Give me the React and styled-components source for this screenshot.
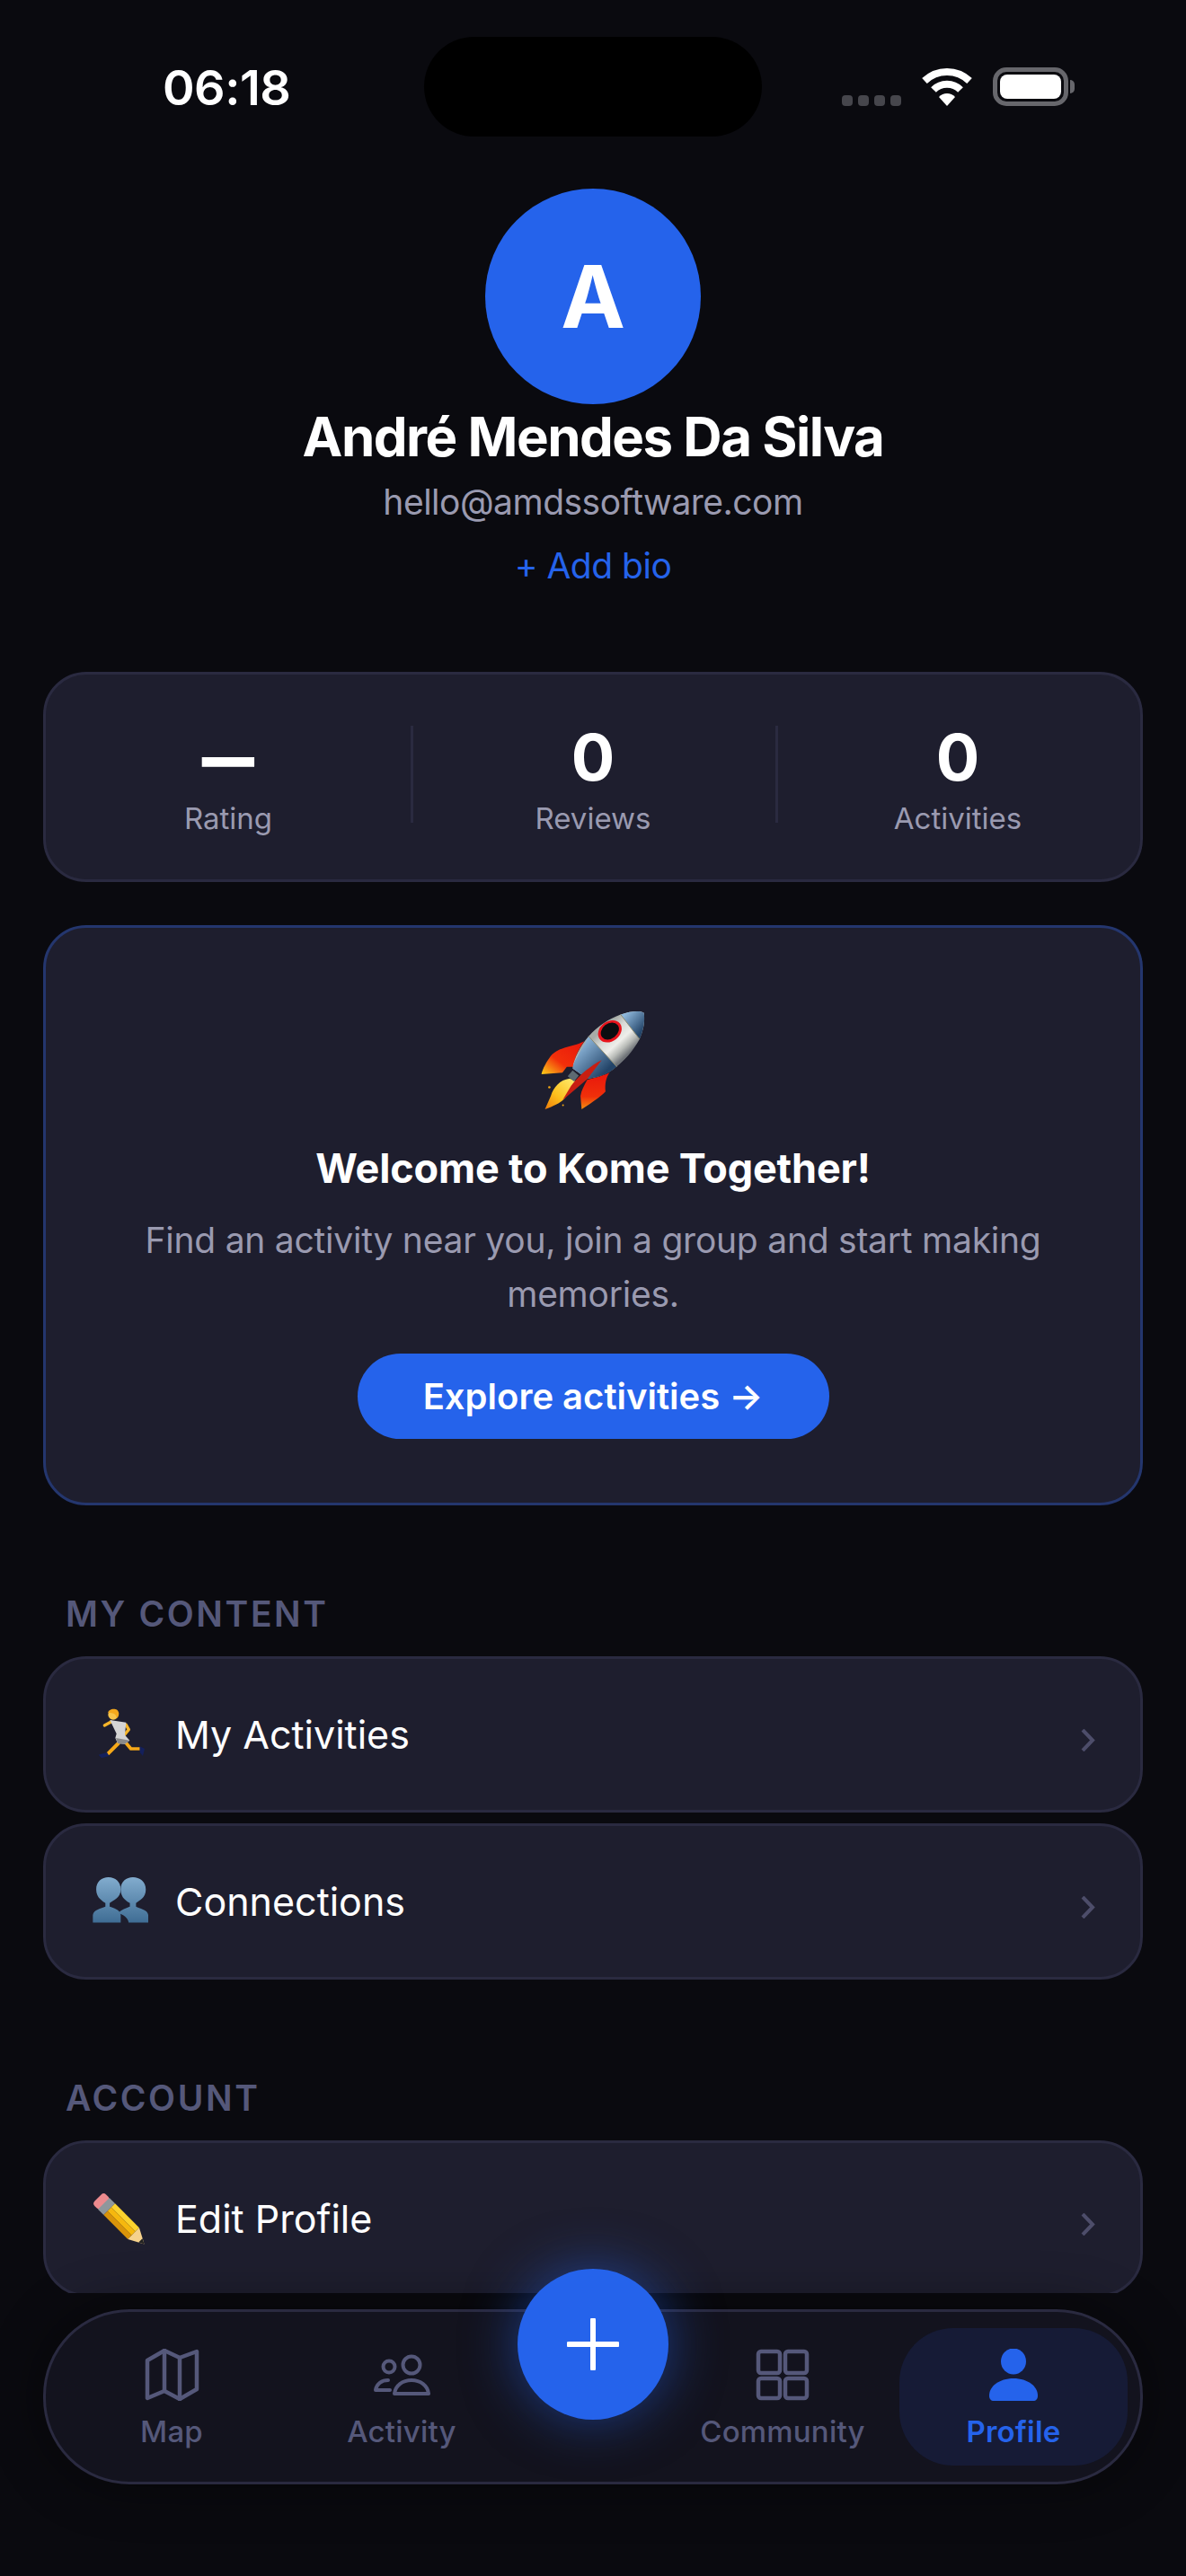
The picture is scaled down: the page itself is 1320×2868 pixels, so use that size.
import React from "react";
import styled, { createGlobalStyle } from "styled-components";

const Global = createGlobalStyle`
  html, body { margin: 0; padding: 0; background: #0a0a0f; }
  * { box-sizing: border-box; }
  body { font-family: Inter, "Noto Sans", sans-serif; color: #fff; }
`;

const Screen = styled.div`
  width: 1320px; height: 2868px; background: #0a0a0f; position: relative; overflow: hidden;
  display: flex; flex-direction: column;
`;
const Clip = styled.div`
  height: 2553px; overflow: hidden; flex: none;
`;
const StatusBar = styled.div`
  display: flex; align-items: flex-start;
  padding: 41px 0 0 181px; height: 210px;
`;
const Time = styled.div`
  font: 600 54px/54px Inter, sans-serif; width: 142px; margin: 30px 149px 0 0; letter-spacing: -0.5px; white-space: nowrap;
`;
const Island = styled.div`
  width: 376px; height: 111px; background: #000; border-radius: 56px; margin-right: 89px;
`;
const StatusIcons = styled.div`
  display: flex; align-items: flex-end; margin-top: 34px; height: 43px;
`;
const Dots = styled.div`
  display: flex; gap: 6px; margin-right: 22px;
`;
const Dot = styled.span`
  width: 12px; height: 12px; border-radius: 4px; background: #46464c;
`;
const Wifi = styled.svg`
  width: 58px; height: 43px; margin-right: 22px; display: block;
`;
const Battery = styled.div`
  width: 84px; height: 43px; border: 5px solid #67676c; border-radius: 15px; padding: 3px; position: relative;
  &::before { content: ""; display: block; width: 100%; height: 100%; background: #fff; border-radius: 8px; }
  &::after { content: ""; position: absolute; right: -12px; top: 9px; width: 5px; height: 15px; background: #67676c; border-radius: 0 5px 5px 0; }
`;

const Profile = styled.section`
  display: flex; flex-direction: column; align-items: center;
`;
const Avatar = styled.div`
  width: 240px; height: 240px; border-radius: 50%; background: #2563eb; display: flex; align-items: center; justify-content: center;
  font: 700 96px/1 Inter, sans-serif; color: #fff;
`;
const Name = styled.h1`
  margin: 0; font: 700 60px/72px Inter, sans-serif; letter-spacing: -1.5px; color: #fff;
`;
const Email = styled.div`
  margin-top: 13px; font: 400 39px/48px Inter, sans-serif; letter-spacing: -0.5px; color: #9a9ab0;
`;
const AddBio = styled.div`
  margin-top: 23px; font: 400 39px/48px Inter, sans-serif; letter-spacing: -0.5px; color: #2563eb;
`;

const Card = styled.div`
  margin: 0 48px; background: #1e1e2e; border: 3px solid ${p => p.$blue ? "#24366e" : "#2a2a40"}; border-radius: 48px;
`;
const Stats = styled(Card)`
  margin-top: 94px; height: 234px; display: flex; align-items: center;
`;
const Stat = styled.div`
  flex: 1; display: flex; flex-direction: column; align-items: center; position: relative; height: 108px; margin-top: -6px;
  & + &::before { content: ""; position: absolute; left: 0; top: 0; bottom: 0; width: 3px; background: #2a2a40; }
`;
const StatValue = styled.div`
  font: 700 72px/72px Inter, sans-serif; color: #fff; margin-top: -1px; height: 72px;
`;
const StatDash = styled(StatValue)`
  font-weight: 900;
  transform: scaleX(0.81);
`;
const StatLabel = styled.div`
  font: 400 33px/40px Inter, sans-serif; color: #9a9ab0; margin-top: 12px;
`;

const Welcome = styled(Card)`
  margin-top: 48px; height: 646px; display: flex; flex-direction: column; align-items: center; padding-top: 90px;
`;
const Rocket = styled.svg`
  width: 120px; height: 115px; display: block;
`;
const WelcomeTitle = styled.h2`
  margin: 33px 0 0; font: 700 45px/60px Inter, sans-serif; letter-spacing: -0.15px; color: #fff;
`;
const WelcomeBody = styled.p`
  margin: 20px 0 0; width: 1060px; text-align: center; font: 400 39px/60px Inter, sans-serif; letter-spacing: -0.24px; color: #9a9ab0;
`;
const Cta = styled.button`
  margin-top: 36px; width: 525px; height: 95px; border: 0; border-radius: 48px; background: #2563eb; color: #fff;
  font: 600 40px/1 Inter, sans-serif; padding: 0;
`;

const SectionTitle = styled.h3`
  margin: ${p => p.$first ? "97px" : "108px"} 73px 23px; font: 600 39px/48px Inter, sans-serif; letter-spacing: 2.6px; color: #55587a;
`;
const Row = styled(Card)`
  height: 174px; display: flex; align-items: center; padding: 0 50px 0 52px; margin-bottom: 12px;
`;
const RowIcon = styled.svg`
  width: 62px; height: 62px; display: block; flex: none; margin-right: 30px;
`;
const RowLabel = styled.span`
  flex: 1; font: 400 43px/54px Inter, sans-serif; color: #fff;
`;
const Chevron = styled.svg`
  width: 16px; height: 25px; display: block; margin-top: 12px;
`;

const NavWrap = styled.div`
  padding: 18px 48px 0;
`;
const Nav = styled.nav`
  height: 195px; border: 3px solid #2a2a40; border-radius: 96px; background: #13131e;
  box-shadow: 0 0 60px rgba(0, 0, 0, 0.45);
  display: grid; grid-template-columns: 256px 256px 168px 256px 256px; align-items: center; padding-left: 12px;
`;
const NavItem = styled.div`
  height: 153px; display: flex; flex-direction: column; align-items: center; padding-top: 23px; border-radius: 60px;
  background: ${p => p.$active ? "#161b36" : "transparent"};
  margin-left: ${p => p.$active ? "2px" : "0"};
  color: ${p => p.$active ? "#2563eb" : "#55587a"};
`;
const NavIconBox = styled.svg`
  width: 64px; height: 58px; display: block; flex: none;
`;
const NavLabel = styled.span`
  margin-top: 14px; font: ${p => p.$active ? 600 : 500} 33px/40px Inter, sans-serif; letter-spacing: 0.2px;
`;
const Fab = styled.div`
  position: absolute; left: 576px; top: 2526px; width: 168px; height: 168px; border-radius: 50%; background: #2563eb;
  box-shadow: 0 0 60px rgba(37, 99, 235, 0.5); display: flex; align-items: center; justify-content: center;
`;
const Plus = styled.svg`
  width: 58px; height: 58px; display: block;
`;

const RocketArt = () => (
  <Rocket viewBox="230 120 370 355">
    <defs>
      <linearGradient id="finL" x1="1" y1="0" x2="0" y2="1"><stop offset="0" stopColor="#e8160c"/><stop offset=".6" stopColor="#f2300a"/><stop offset="1" stopColor="#fbd21a"/></linearGradient>
      <linearGradient id="finR" x1="0" y1="0" x2="0" y2="1"><stop offset="0" stopColor="#e8160c"/><stop offset=".65" stopColor="#f0300a"/><stop offset="1" stopColor="#f29010"/></linearGradient>
      <linearGradient id="flame" x1="1" y1="0" x2="0" y2="1"><stop offset="0" stopColor="#fff27a"/><stop offset=".6" stopColor="#fdbf1c"/><stop offset="1" stopColor="#ee7a08"/></linearGradient>
      <linearGradient id="silver" x1="0" y1="0" x2="1" y2="1"><stop offset=".36" stopColor="#a8aca8"/><stop offset=".45" stopColor="#d8dad6"/><stop offset=".55" stopColor="#eeeeea"/><stop offset=".62" stopColor="#b9bcb8"/><stop offset=".69" stopColor="#6f7378"/></linearGradient>
      <linearGradient id="blue" x1="0" y1="0" x2="1" y2="1"><stop offset=".2" stopColor="#8fb8dc"/><stop offset=".75" stopColor="#234468"/></linearGradient>
      <clipPath id="hull"><path d="M510 140C545 128 580 126 590 135C595 170 585 200 575 225C550 270 520 300 495 320C470 345 420 360 395 360L345 325C350 290 370 250 400 215C430 180 470 155 510 140Z"/></clipPath>
    </defs>
    <path d="M385 232C340 255 290 250 265 290C250 310 240 335 238 345L310 340L325 320L350 320C350 290 365 260 385 232Z" fill="url(#finL)"/>
    <path d="M472 340C440 355 410 360 395 365C385 385 375 400 372 420L376 466C400 450 440 425 458 405C455 380 460 355 472 340Z" fill="url(#finR)"/>
    <path d="M335 360C300 365 280 390 270 420L250 466C280 455 300 445 315 432L365 375Z" fill="url(#flame)"/>
    <circle cx="265" cy="390" r="4" fill="#f4a814"/><circle cx="312" cy="452" r="3" fill="#f4a814"/>
    <path d="M345 332L366 350L350 370L328 352Z" fill="#5d6a72"/>
    <g clipPath="url(#hull)">
      <rect x="330" y="120" width="270" height="250" fill="url(#silver)"/>
      <path d="M400 215L497 320L420 380L330 340Z" fill="url(#blue)"/>
      <path d="M510 140L575 225L610 200L600 110Z" fill="url(#blue)"/>
    </g>
    <path d="M400 215L497 320M510 140L575 225" stroke="#8b8a70" strokeWidth="3"/>
    <ellipse cx="473" cy="198" rx="44" ry="34" transform="rotate(-38 473 198)" fill="#e8141c"/>
    <ellipse cx="473" cy="197" rx="34" ry="26" transform="rotate(-38 473 197)" fill="#0b0d10"/>
    <path d="M445 297L395 362L310 435L340 385C370 345 410 315 445 297Z" fill="#c81e12"/>
  </Rocket>
);

const Runner = () => (
  <RowIcon viewBox="210 425 186 186">
    <path d="M296 548L262 582" stroke="#f5a818" strokeWidth="12" fill="none" strokeLinecap="round"/>
    <path d="M318 542L338 566L368 566" stroke="#f5a818" strokeWidth="11" fill="none" strokeLinejoin="round"/>
    <path d="M230 586L258 578L266 590L240 597Z" fill="#14205c"/>
    <path d="M368 558L384 566L378 590L368 578Z" fill="#14205c"/>
    <path d="M272 476L250 488M322 486L331 502L316 520" stroke="#f5b52a" strokeWidth="10" fill="none" strokeLinecap="round" strokeLinejoin="round"/>
    <path d="M268 470L322 478L318 520L334 538L318 550L294 548L286 530L290 516Z" fill="#d4d4d4"/>
    <path d="M288 530L334 538L318 550L294 548Z" fill="#8a8a8a"/>
    <circle cx="279" cy="452" r="17" fill="#f8c44a"/>
    <path d="M262 446C262 432 296 426 298 448C298 456 294 462 290 464C292 450 276 444 262 446Z" fill="#f4a81c"/>
  </RowIcon>
);

const Busts = () => (
  <RowIcon viewBox="220 1000 182 182">
    <defs>
      <linearGradient id="bust" x1="0" y1="0" x2="0" y2="1"><stop offset="0" stopColor="#82acce"/><stop offset="1" stopColor="#3f6d94"/></linearGradient>
    </defs>
    <path d="M312 1160V1135C310 1118 288 1112 276 1108V1096C286 1088 312 1080 312 1052C312 1026 294 1012 272 1012C250 1012 232 1026 232 1052C232 1080 254 1090 262 1096V1108C248 1114 224 1118 221 1135V1160Z" fill="url(#bust)"/>
    <path d="M402 1160V1135C400 1118 372 1114 362 1108V1096C372 1088 394 1080 394 1052C394 1026 374 1012 352 1012C330 1012 312 1026 312 1052C312 1080 332 1090 342 1096V1108C332 1112 312 1118 304 1130C320 1132 336 1145 338 1160Z" fill="url(#bust)"/>
  </RowIcon>
);

const Pencil = () => (
  <RowIcon viewBox="0 0 62 62">
    <g transform="translate(6 8) rotate(45)">
      <rect x="0" y="-9" width="11" height="18" rx="4" fill="#ec8a8e"/>
      <rect x="9" y="-9" width="9" height="18" fill="#8f979c"/>
      <rect x="18" y="-9" width="38" height="6" fill="#fcd22e"/>
      <rect x="18" y="-3" width="38" height="6" fill="#f6b80e"/>
      <rect x="18" y="3" width="38" height="6" fill="#d9940a"/>
      <path d="M56 -9L73 0L56 9Z" fill="#f6d28c"/>
      <path d="M67 -3L73 0L67 3Z" fill="#222"/>
    </g>
  </RowIcon>
);

const Chev = () => (
  <Chevron viewBox="0 0 16 25"><path d="M2 1L13 12.5L2 24" fill="none" stroke="#4d4d6a" strokeWidth="4"/></Chevron>
);

const stroke = { fill: "none", stroke: "currentColor", strokeWidth: 4.5, strokeLinejoin: "round", strokeLinecap: "round" };

export default function App() {
  return (
    <Screen>
      <Global />
      <Clip>
        <StatusBar>
          <Time>06:18</Time>
          <Island />
          <StatusIcons>
            <Dots><Dot /><Dot /><Dot /><Dot /></Dots>
            <Wifi viewBox="0 0 58 43">
              <path d="M4 15A36 36 0 0 1 54 15" fill="none" stroke="#fff" strokeWidth="8"/>
              <path d="M14 25A21 21 0 0 1 44 25" fill="none" stroke="#fff" strokeWidth="8"/>
              <path d="M20 33A12 12 0 0 1 38 33L29 43Z" fill="#fff"/>
            </Wifi>
            <Battery />
          </StatusIcons>
        </StatusBar>
        <Profile>
          <Avatar>A</Avatar>
          <Name>André Mendes Da Silva</Name>
          <Email>hello@amdssoftware.com</Email>
          <AddBio>+ Add bio</AddBio>
        </Profile>
        <Stats>
          <Stat><StatDash>—</StatDash><StatLabel>Rating</StatLabel></Stat>
          <Stat><StatValue>0</StatValue><StatLabel>Reviews</StatLabel></Stat>
          <Stat><StatValue>0</StatValue><StatLabel>Activities</StatLabel></Stat>
        </Stats>
        <Welcome $blue>
          <RocketArt />
          <WelcomeTitle>Welcome to Kome Together!</WelcomeTitle>
          <WelcomeBody>Find an activity near you, join a group and start making memories.</WelcomeBody>
          <Cta>Explore activities →</Cta>
        </Welcome>
        <SectionTitle $first>MY CONTENT</SectionTitle>
        <Row><Runner /><RowLabel>My Activities</RowLabel><Chev /></Row>
        <Row><Busts /><RowLabel>Connections</RowLabel><Chev /></Row>
        <SectionTitle>ACCOUNT</SectionTitle>
        <Row><Pencil /><RowLabel>Edit Profile</RowLabel><Chev /></Row>
      </Clip>
      <NavWrap>
        <Nav>
          <NavItem>
            <NavIconBox viewBox="0 0 64 58"><g {...stroke}><path d="M5 13L24 2L41 10L60 3V45L41 56L24 47L5 55Z"/><path d="M24 2V47M41 10V56"/></g></NavIconBox>
            <NavLabel>Map</NavLabel>
          </NavItem>
          <NavItem>
            <NavIconBox viewBox="0 0 64 58"><g {...stroke} strokeWidth="4"><circle cx="18" cy="20" r="6.5"/><circle cx="43" cy="18" r="9.5"/><path d="M19 46H3C4 39 10 35 17 35"/><path d="M24 50C25 41 33 35 43 35C53 35 61 41 62 50Z"/></g></NavIconBox>
            <NavLabel>Activity</NavLabel>
          </NavItem>
          <span />
          <NavItem>
            <NavIconBox viewBox="0 0 64 58"><g {...stroke}><rect x="5" y="3" width="24" height="24" rx="3"/><rect x="35" y="3" width="24" height="24" rx="3"/><rect x="5" y="33" width="24" height="22" rx="3"/><rect x="35" y="33" width="24" height="22" rx="3"/></g></NavIconBox>
            <NavLabel>Community</NavLabel>
          </NavItem>
          <NavItem $active>
            <NavIconBox viewBox="0 0 64 58"><ellipse cx="32" cy="14" rx="14" ry="14.5" fill="currentColor"/><path d="M5 52C5 42 16 33 32 33C48 33 59 42 59 52C59 56 57 58 54 58H10C7 58 5 56 5 52Z" fill="currentColor"/></NavIconBox>
            <NavLabel $active>Profile</NavLabel>
          </NavItem>
        </Nav>
      </NavWrap>
      <Fab><Plus viewBox="0 0 58 58"><path d="M29 2V56M2 29H56" stroke="#fff" strokeWidth="6" strokeLinecap="round"/></Plus></Fab>
    </Screen>
  );
}
